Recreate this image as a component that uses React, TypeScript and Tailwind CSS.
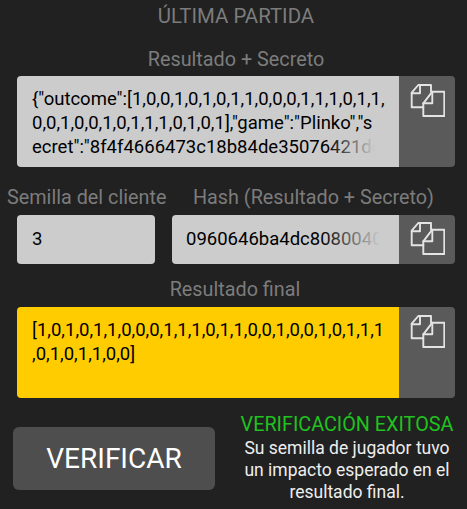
const Copy = () => (
  <svg width="36" height="36" viewBox="0 0 36 36" fill="none" stroke="#e4e4e4" strokeWidth="1.9" strokeLinejoin="round" strokeLinecap="round">
    <path d="M14.3 26.3H2.7V11.7L9.3 4H22v6.7" />
    <path d="M11 4v8.3H2.7" />
    <path d="M14.3 22.3L23.3 10.7H35.3V35H14.3Z" />
    <path d="M23.3 10.7V22.3H14.3" />
  </svg>
);

const CopyButton = () => (
  <div className="w-14 shrink-0 self-stretch bg-[#5a5a5a] flex justify-center items-start pt-[5px]">
    <Copy />
  </div>
);

const CopyButtonSmall = () => (
  <div className="w-14 shrink-0 bg-[#5a5a5a] flex justify-center items-start pt-[4px]">
    <Copy />
  </div>
);

const Label = ({ children, className = "" }: { children: React.ReactNode; className?: string }) => (
  <div className={`text-[19.8px] leading-[22px] text-[#7c7c7c] text-center whitespace-nowrap ${className}`}>{children}</div>
);

export default function App() {
  return (
    <div className="w-[467px] h-[509px] overflow-hidden bg-[#212121] font-['Roboto',sans-serif] flex flex-col">
      <div className="pt-[5px] pl-[5px] text-[20.4px] leading-[22px] text-[#7c7c7c] text-center whitespace-nowrap">ÚLTIMA PARTIDA</div>
      <Label className="mt-[22px] pl-[5px]">Resultado + Secreto</Label>
      <div className="ml-[17px] mr-[12px] mt-[5px] h-[91px] flex rounded-[4px] overflow-hidden">
        <div className="flex-1 bg-[#cccccc] pl-[15px] pr-[8px] pt-[11px] overflow-hidden">
          <div className="relative h-[66px] overflow-hidden text-[18.5px] leading-[24px] text-black whitespace-nowrap">
            <div>{'{"outcome":[1,0,0,1,0,1,0,1,1,0,0,0,1,1,1,0,1,1,'}</div>
            <div>{'0,0,1,0,0,1,0,1,1,1,0,1,0,1],"game":"Plinko","s'}</div>
            <div>{'ecret":"8f4f4666473c18b84de35076421de'}</div>
            <div className="absolute right-0 bottom-0 h-[20px] w-[64px] bg-gradient-to-r from-transparent to-[#cccccc] to-75%" />
          </div>
        </div>
        <CopyButton />
      </div>

      <div className="flex mt-[20px] pl-[7px] pr-[33px] justify-between">
        <Label>Semilla del cliente</Label>
        <Label>Hash (Resultado + Secreto)</Label>
      </div>
      <div className="ml-[17px] mr-[12px] mt-[6px] flex gap-[17px] h-[49px]">
        <div className="w-[138px] bg-[#cccccc] rounded-[4px] pl-[15px] flex items-center text-[18.5px] text-black">3</div>
        <div className="flex-1 flex rounded-[4px] overflow-hidden">
          <div className="relative flex-1 bg-[#cccccc] pl-[14px] flex items-center overflow-hidden text-[18.5px] text-black whitespace-nowrap">
            0960646ba4dc8080040
            <div className="absolute right-[12px] top-0 bottom-0 w-[66px] bg-gradient-to-r from-transparent to-[#cccccc] to-90%" />
          </div>
          <CopyButtonSmall />
        </div>
      </div>

      <Label className="mt-[15px] pl-[3px]">Resultado final</Label>
      <div className="ml-[17px] mr-[12px] mt-[6px] h-[91px] flex rounded-[4px] overflow-hidden">
        <div className="flex-1 bg-[#ffcc00] pl-[15px] pt-[11px] text-[18.5px] leading-[24px] text-black whitespace-nowrap">
          <div>[1,0,1,0,1,1,0,0,0,1,1,1,0,1,1,0,0,1,0,0,1,0,1,1,1</div>
          <div>,0,1,0,1,1,0,0]</div>
        </div>
        <CopyButton />
      </div>

      <div className="flex mt-[9px]">
        <button className="ml-[13px] mt-[20px] w-[202px] h-[63px] bg-[#4e4e4e] rounded-[6px] text-white text-[28px] leading-none">
          VERIFICAR
        </button>
        <div className="ml-[25px] w-[214px] pt-[7px] text-center">
          <div className="text-[19.8px] leading-[22px] text-[#1fc21f] whitespace-nowrap">VERIFICACIÓN EXITOSA</div>
          <div className="mt-[1px] text-[17.5px] leading-[22px] text-[#eeeeee]">
            Su semilla de jugador tuvo<br />un impacto esperado en el<br />resultado final.
          </div>
        </div>
      </div>
    </div>
  );
}
